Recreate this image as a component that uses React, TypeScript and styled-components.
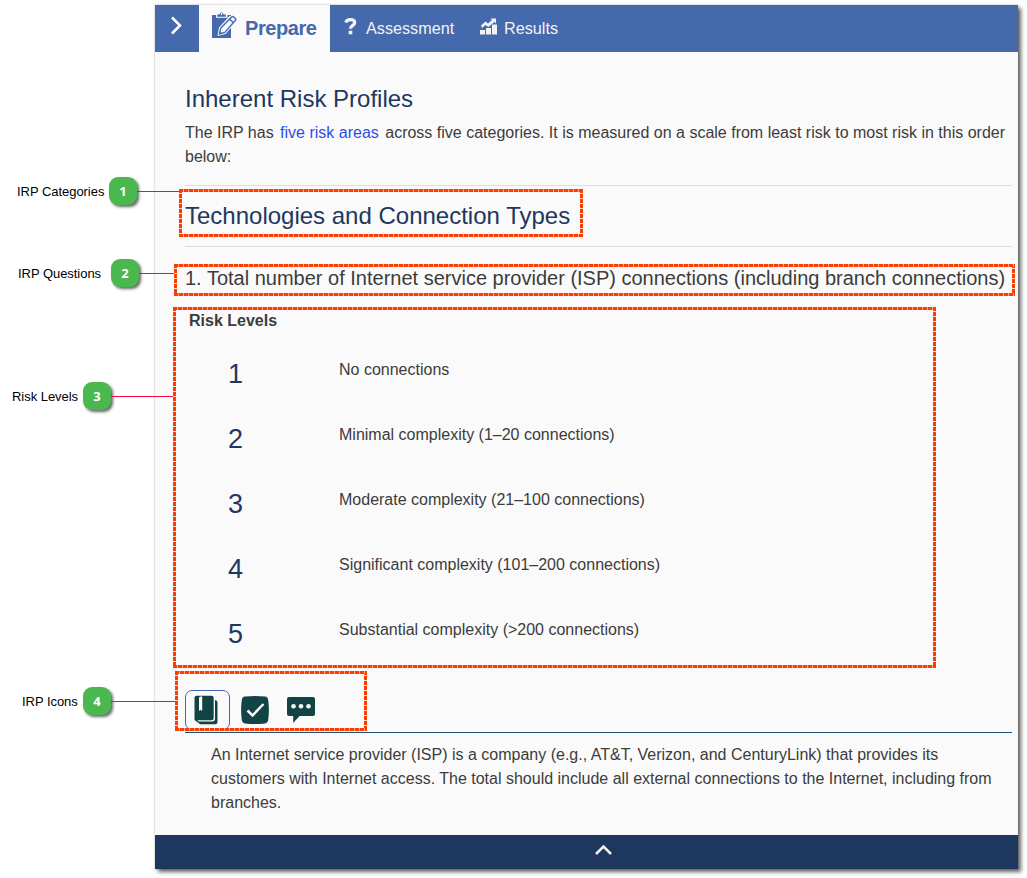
import React from "react";
import styled, { createGlobalStyle } from "styled-components";

const GlobalStyle = createGlobalStyle`
  * { box-sizing: border-box; }
  body { margin: 0; background: #fff; font-family: "Liberation Sans", Arial, sans-serif; }
`;

const Page = styled.div`
  position: relative;
  width: 1027px;
  height: 878px;
  padding: 5px 9px 9px 155px;
  overflow: hidden;
`;

const Panel = styled.main`
  display: flex;
  flex-direction: column;
  height: 864px;
  background: #fafafa;
  color: #3c3c3c;
  font-size: 16px;
  line-height: 24px;
  box-shadow: 3px 3px 4px rgba(0, 0, 0, 0.6), 0 0 2px rgba(0, 0, 0, 0.25);
`;

const TabBar = styled.nav`
  display: flex;
  height: 47px;
  flex: none;
  background: #4469ad;
`;

const Toggle = styled.button`
  width: 44px;
  padding: 0 0 6px;
  border: 0;
  background: none;
  color: #fff;
  display: flex;
  align-items: center;
  justify-content: center;
`;

const Tab = styled.div<{ $active?: boolean; $width: number; $gap: number; $left: number }>`
  display: flex;
  align-items: center;
  width: ${(p) => p.$width}px;
  gap: ${(p) => p.$gap}px;
  padding-left: ${(p) => p.$left}px;
  padding-bottom: 2px;
  background: ${(p) => (p.$active ? "#fafafa" : "transparent")};
  color: ${(p) => (p.$active ? "#4469ad" : "#f3f3f3")};
  font-size: ${(p) => (p.$active ? "20px" : "16.2px")};
  letter-spacing: ${(p) => (p.$active ? "-0.42px" : "0")};
  font-weight: ${(p) => (p.$active ? 700 : 400)};
  svg { flex: none; margin-bottom: ${(p) => (p.$active ? "5px" : "2px")}; }
`;

const Content = styled.section`
  flex: 1;
  padding: 32px 6px 0 30px;
`;

const Title = styled.h1`
  margin: 0;
  color: #1e375f;
  font-size: 24px;
  font-weight: 400;
  line-height: 30px;
`;

const Intro = styled.p`
  margin: 7px 0 16px;
  a { color: #2b4df0; margin: 0 2px; }
`;

const Category = styled.h2`
  margin: 0;
  height: 62px;
  border: solid #dedede;
  border-width: 1px 0;
  color: #1e375f;
  font-size: 24px;
  font-weight: 400;
  line-height: 60px;
`;

const Question = styled.h3`
  margin: 15px 0;
  font-size: 20px;
  font-weight: 400;
  line-height: 32px;
  white-space: nowrap;
`;

const LevelsTitle = styled.div`
  padding-left: 4px;
  height: 33px;
  font-weight: 700;
`;

const Level = styled.div`
  display: grid;
  grid-template-columns: 101px 1fr;
  column-gap: 53px;
  height: 65px;
  align-items: center;
`;

const LevelNumber = styled.span`
  padding-bottom: 2px;
  color: #1e375f;
  font-size: 27px;
  text-align: center;
`;

const LevelText = styled.span`
  padding-bottom: 10px;
`;

const IconRow = styled.div`
  display: flex;
  align-items: flex-start;
  height: 43px;
  margin-top: 23px;
  border-bottom: 1px solid #1d5179;
  color: #124445;
`;

const IconButton = styled.button<{ $active?: boolean; $width: number }>`
  display: flex;
  justify-content: center;
  align-items: center;
  width: ${(p) => p.$width}px;
  height: 40px;
  padding: ${(p) => (p.$active ? "0 3px 0 0" : "0")};
  border: 1px solid ${(p) => (p.$active ? "#4469ad" : "transparent")};
  border-radius: 7px;
  background: none;
  color: inherit;
`;

const Note = styled.p`
  margin: 10px 0 0;
  padding-left: 26px;
  width: 820px;
`;

const Footer = styled.footer`
  display: flex;
  align-items: center;
  justify-content: center;
  height: 34px;
  padding: 0 0 3px 33px;
  background: #1e375f;
  color: #f3f3f3;
`;

/* Dashed outline laid over a region of the panel */
const Outline = styled.div<{ $x: number; $y: number; $w: number; $h: number }>`
  position: absolute;
  left: ${(p) => p.$x}px;
  top: ${(p) => p.$y}px;
  width: ${(p) => p.$w}px;
  height: ${(p) => p.$h}px;
  pointer-events: none;
  --h: repeating-linear-gradient(90deg, #ff3c00 0 4px, #ffa488 4px 5px);
  --v: repeating-linear-gradient(180deg, #ff3c00 0 4px, #ffd9cc 4px 5px);
  background: var(--h) 0 0 / 100% 3px no-repeat, var(--h) 0 100% / 100% 3px no-repeat,
    var(--v) 0 0 / 3px 100% no-repeat, var(--v) 100% 0 / 3px 100% no-repeat;
`;

/* Label, numbered badge and the leader line to its outline */
const Callout = styled.div<{ $x: number; $y: number; $w: number }>`
  position: absolute;
  left: ${(p) => p.$x}px;
  top: ${(p) => p.$y}px;
  width: ${(p) => p.$w}px;
  height: 28px;
  display: flex;
  align-items: center;
  color: #000;
  font-size: 13px;
  letter-spacing: -0.04px;
  white-space: nowrap;
`;

const CalloutLabel = styled.span<{ $w: number }>`
  flex: none;
  width: ${(p) => p.$w}px;
`;

const Badge = styled.span`
  flex: none;
  width: 28px;
  height: 28px;
  border-radius: 9px;
  background: #4bb74f;
  box-shadow: 2px 2px 3px rgba(0, 0, 0, 0.6);
  color: #fff;
  font: 700 13px/28px "Open Sans", sans-serif;
  text-align: center;
`;

const Leader = styled.span`
  flex: 1;
  height: 1px;
  background: #f5093f;
`;

const levels = [
  "No connections",
  "Minimal complexity (1–20 connections)",
  "Moderate complexity (21–100 connections)",
  "Significant complexity (101–200 connections)",
  "Substantial complexity (>200 connections)",
];

const outlines = [
  { x: 179, y: 189, w: 404, h: 48 },
  { x: 174, y: 264, w: 841, h: 32 },
  { x: 173, y: 307, w: 763, h: 361 },
  { x: 175, y: 671, w: 192, h: 60 },
];

const callouts = [
  { text: "IRP Categories", x: 17, y: 177, label: 92, end: 180 },
  { text: "IRP Questions", x: 18, y: 259, label: 93, end: 175 },
  { text: "Risk Levels", x: 12, y: 382, label: 71, end: 174 },
  { text: "IRP Icons", x: 22, y: 687, label: 61, end: 176 },
];

const Chevron = ({ d, w, h, stroke }: { d: string; w: number; h: number; stroke: number }) => (
  <svg width={w} height={h} viewBox={`0 0 ${w} ${h}`} fill="none" stroke="currentColor" strokeWidth={stroke}>
    <path d={d} />
  </svg>
);

const ClipboardIcon = () => (
  <svg width="26" height="28" viewBox="0 0 26 28">
    <path fill="#4469ad" d="M1 4h19v23H1z" />
    <path fill="#fafafa" d="M5 3h11.500v3.800H5z" />
    <path fill="#4469ad" d="M6.200 5.800V3.500h2.300a2 2 0 0 1 4 0h2.300v2.300z" />
    <circle cx="10.500" cy="3" r="0.900" fill="#fafafa" />
    <path fill="#fafafa" d="M6.500 25 8 16.500 19 4.500l7 5.500-11.500 13z" />
    <path fill="none" stroke="#4469ad" strokeWidth="1.400" strokeLinejoin="round" d="m8.500 23 1.200-5.800L20.600 5.900a1.500 1.500 0 0 1 2.100 0l1.600 1.500a1.500 1.500 0 0 1 0 2.100L13.800 21.400zM18.600 8l3.800 3.700" />
    <path fill="#4469ad" d="m8 23.500.8-3.500 2.600 2.600z" />
  </svg>
);

const QuestionIcon = () => (
  <svg width="13" height="17" viewBox="0 0 13 17" fill="none" stroke="currentColor">
    <path strokeWidth="3.300" d="M1.800 4.600C2.500 2.500 4 1.700 6.300 1.700c2.600 0 4.400 1.100 4.400 3.100 0 2.800-4.200 2.600-4.200 6" />
    <path strokeWidth="3.600" d="M6.500 12.700v3.600" />
  </svg>
);

const ChartIcon = () => (
  <svg width="17" height="17" viewBox="0 0 17 17" fill="currentColor">
    <path d="M0 12h5v4.500H0zM6 10h5v6.500H6zM12 6.500h5v10h-5z" />
    <path d="M1 7.500 5.500 3.500 8 5.500 12 2 10.500.5H16v5l-1.500-1.400L8.300 9 5.500 7 2 10z" />
  </svg>
);

const BookIcon = () => (
  <svg width="24" height="30" viewBox="0 0 24 30">
    <path fill="currentColor" d="M2.500.8h15q2.200 0 2.200 2.200v20q0 2.200-2.200 2.200H3.700q0 1.200 1.500 1.200h13.500q2.300 0 2.300-2.300V5q2.500.3 2.500 2.500v19.300q0 2.500-2.500 2.500H6.200L.5 25V2.800q0-2 2-2z" />
    <path fill="#fafafa" d="M5 3.200Q5 1.600 6.500 1.600h1.700V16L6.600 14.700 5 16z" />
  </svg>
);

const CheckIcon = () => (
  <svg width="28" height="28" viewBox="0 0 28 28">
    <path fill="currentColor" d="M4 .6Q14-.5 24 .6q2.800.4 3.200 3.400 1.400 10 0 20-.4 3-3.200 3.400-10 1.100-20 0Q1.200 27 .8 24-.6 14 .8 4 1.200 1 4 .6z" />
    <path fill="none" stroke="#fafafa" strokeWidth="2.500" d="m6.500 14.500 5 5L22.500 8" />
  </svg>
);

const ChatIcon = () => (
  <svg width="28" height="27" viewBox="0 0 28 27">
    <path fill="currentColor" d="M2 0h24q2 0 2 2v15q0 2-2 2H12.500l-6.300 7V19H2q-2 0-2-2V2q0-2 2-2z" />
    <g fill="#fafafa"><circle cx="6.500" cy="9.300" r="2.300" /><circle cx="14" cy="9.300" r="2.300" /><circle cx="21.500" cy="9.300" r="2.300" /></g>
  </svg>
);

export default function App() {
  return (
    <Page>
      <GlobalStyle />
      <Panel>
        <TabBar>
          <Toggle aria-label="Expand menu">
            <Chevron d="m2 1.500 8 8-8 8" w={14} h={19} stroke={2.5} />
          </Toggle>
          <Tab $active $width={131} $gap={8} $left={12}><ClipboardIcon />Prepare</Tab>
          <Tab $width={135} $gap={9} $left={14}><QuestionIcon />Assessment</Tab>
          <Tab $width={120} $gap={7} $left={15}><ChartIcon />Results</Tab>
        </TabBar>
        <Content>
          <Title>Inherent Risk Profiles</Title>
          <Intro>
            The IRP has <a>five risk areas</a> across five categories. It is measured on a scale
            from least risk to most risk in this order below:
          </Intro>
          <Category>Technologies and Connection Types</Category>
          <Question>
            1. Total number of Internet service provider (ISP) connections (including branch connections)
          </Question>
          <LevelsTitle>Risk Levels</LevelsTitle>
          {levels.map((text, i) => (
            <Level key={text}>
              <LevelNumber>{i + 1}</LevelNumber>
              <LevelText>{text}</LevelText>
            </Level>
          ))}
          <IconRow>
            <IconButton $active $width={45} aria-label="Reference"><BookIcon /></IconButton>
            <IconButton $width={50} aria-label="Check"><CheckIcon /></IconButton>
            <IconButton $width={42} aria-label="Comment"><ChatIcon /></IconButton>
          </IconRow>
          <Note>
            An Internet service provider (ISP) is a company (e.g., AT&amp;T, Verizon, and CenturyLink) that
            provides its customers with Internet access. The total should include all external connections
            to the Internet, including from branches.
          </Note>
        </Content>
        <Footer><Chevron d="m1 9 7.500-7.500L16 9" w={17} h={11} stroke={2.5} /></Footer>
      </Panel>
      {callouts.map((c, i) => (
        <Callout key={c.text} $x={c.x} $y={c.y} $w={c.end - c.x}>
          <CalloutLabel $w={c.label}>{c.text}</CalloutLabel>
          <Badge>{i + 1}</Badge>
          <Leader />
        </Callout>
      ))}
      {outlines.map((o) => (
        <Outline key={o.y} $x={o.x} $y={o.y} $w={o.w} $h={o.h} />
      ))}
    </Page>
  );
}
